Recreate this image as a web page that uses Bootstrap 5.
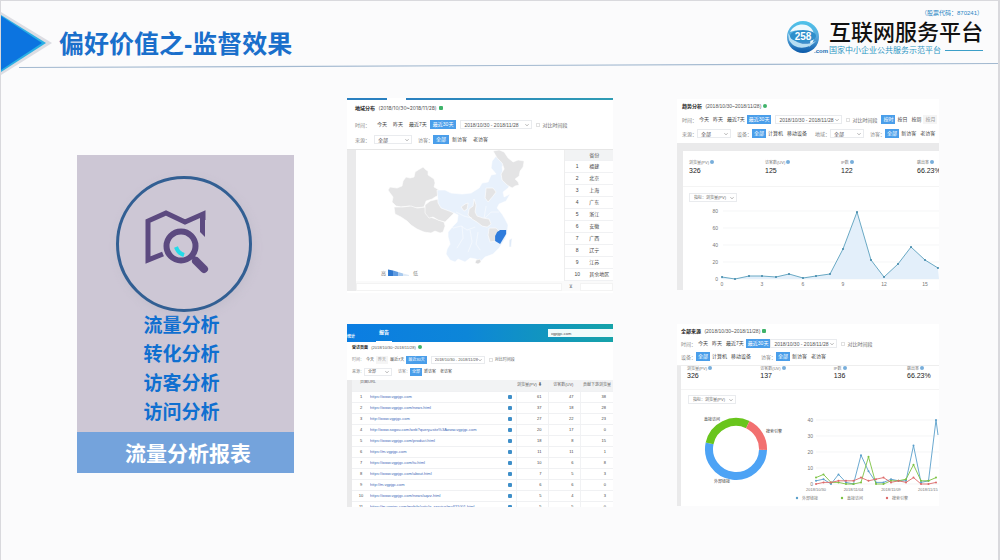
<!DOCTYPE html>
<html lang="zh-CN">
<head>
<meta charset="utf-8">
<meta name="viewport" content="width=device-width, initial-scale=1">
<title>偏好价值之-监督效果</title>
<link rel="stylesheet" href="https://cdn.jsdelivr.net/npm/bootstrap@5.3.0/dist/css/bootstrap.min.css">
<style>
:root{--act:#4a9eea;--line:#e9ebee;--strip:#eaeaeb}
body{background:#fbfbfc;font-family:"Liberation Sans","Noto Sans CJK SC",sans-serif;min-height:100vh;border:1px solid #d9d9dd;border-width:1px 2px 0 1px;color:#444;overflow-x:hidden}
.top-band{height:75px}
.top-band .rule{left:0;top:0;width:100%;height:75px;pointer-events:none}
.arrow{width:51px;height:63px;margin-top:11px}
h1{font:700 25px/34px "Liberation Sans","Noto Sans CJK SC",sans-serif;color:#1a6fcb;margin:26px 0 0 7px}
.brand{margin:6px 15px 0 0}
.brand-stock{font-size:6px;line-height:12px;color:#2a86c4}
.brand-name{font:500 22px/22px "Noto Sans CJK SC",sans-serif;color:#111;white-space:nowrap}
.brand-sub{font:400 8px/10px "Noto Sans CJK SC",sans-serif;color:#2f97c4;white-space:nowrap;margin-top:4px}
.brand-sub i{height:1px;background:#3c9fc8}
.logo{width:44px;height:36px}
main{display:grid;grid-template-columns:217fr 592fr;column-gap:53px;padding:22px 59px 0 76px;align-items:start}
.report{background:#cdc7d5;margin-top:57px}
.report .ring{width:136px;height:136px;margin:21px auto 0;border:3px solid #325f93;border-radius:50%;box-shadow:2px 3px 8px #b9b4c477;position:relative;left:-2px}
.report li{font:700 19px/29px "Noto Sans CJK SC",sans-serif;color:#0f6fd0}
.report ul{margin:-3px 8px 7px 0}
.report h2{background:#74a3dc;color:#fff;font:700 21px/41px "Noto Sans CJK SC",sans-serif;margin:0;padding-left:5px}
.shots{display:grid;grid-template-columns:266fr 262fr;column-gap:64px;row-gap:31px;align-items:start}
.shot{background:#fff;font-size:5px;line-height:6px;overflow:hidden;min-width:0;white-space:nowrap}
.shot svg{display:block}
.shot h3{font-size:5px;line-height:8px;margin:0;font-weight:700;color:#222}
.shot h3 span{font-weight:400;color:#555;margin:0 2px}
.tip{display:inline-block;width:4px;height:4px;border-radius:1px;background:#3fb36a}
.tip.round{border-radius:50%}
.flt{display:flex;align-items:center;height:9px}
.flt label,.flt .cap{color:#888}
.flt label[for^="c"]{color:#666}
.seg{border:0;background:#fff;color:#444;font:inherit;line-height:9px;height:9px;padding:0 2px;border-radius:0}
.seg.on{background:var(--act);color:#fff}
.seg.dim{background:#f5f5f5;color:#999}
.roomy .seg{padding:0 3px}
.mini.form-select{font:inherit;line-height:8px;height:9px;min-height:0;width:34px;padding:0 6px 0 3px;border:1px solid var(--line);border-radius:0;color:#555;background-color:#fff;background-size:4px 4px;background-position:right 2px center;background-image:url("data:image/svg+xml,%3Csvg xmlns='http://www.w3.org/2000/svg' viewBox='0 0 10 10'%3E%3Cpath d='M1 3l4 4 4-4' fill='none' stroke='%23777' stroke-width='1.4'/%3E%3C/svg%3E")}
.mini.form-select.date{width:67px}
.roomy .mini.form-select{width:38px}
.roomy .mini.form-select.date{width:72px}
.mini.form-select.metric{width:48px;color:#666;font-size:4px;padding-left:4px}
.tick.form-check-input{width:4px;height:4px;margin:0 2px 0 4px;border:1px solid #e1e1e1;border-radius:0;float:none;min-height:0}
.g6{margin-left:6px}
.shot.a{height:195px}
.tabbar{height:2px;background:linear-gradient(90deg,#2a80c0 0 15%,#fff 15% 22%,#2a80c0 22%,#2f9cb4)}
.side{background:var(--strip);flex:none}
table.plain{border-collapse:collapse;width:100%;table-layout:fixed;font-size:5px;line-height:6px;color:#444}
table.plain th{background:#f2f3f4;font-weight:400;color:#666}
table.plain td,table.plain th{padding:0;border-bottom:1px solid #f0f1f3;overflow:hidden}
.prov{border-left:1px solid #eee}
.prov tr{height:12px}
.prov tr:first-child{height:10px}
.prov td:first-child{text-align:center}
.map{width:81%;flex:none}
.foot{background:#fafafa;padding-top:2px}
.foot div{background:#fff;height:8px;border:1px solid #f3f3f3}
.kpi{display:grid;grid-template-columns:76fr 76fr 76fr 22px}
.kpi dt{font-weight:400;font-size:4px;line-height:6px;color:#777}
.kpi dd{font-size:7px;line-height:10px;margin:0;color:#222}
.info{display:inline-block;width:4px;height:4px;border-radius:50%;background:#78aedb}
.small4,.small4 h3,.small4 table.plain{font-size:4px}
.small4 .seg,.small4 .flt{height:8px;line-height:8px}
.small4 .mini.form-select{width:28px;height:8px;line-height:6px}
.small4 .mini.form-select.date{width:54px}
.navi{height:18px;background:linear-gradient(90deg,#0b7de2,#0d86d8 45%,#16a3a9)}
.navi a{color:#fff;text-decoration:none;font-weight:700;font-size:4px}
.navi a.cur{border-bottom:1px solid #fff;line-height:17px;padding:0 3px;height:18px;font-size:5px}
.navi input{width:65px;height:8px;font-size:4px;line-height:6px;padding:0 3px;border:0;border-radius:0;background:#f1fbfb;color:#444;min-height:0}
.urls tr{height:11px}
.urls td:nth-child(n+4),.urls th:nth-child(n+4){text-align:right;padding-right:7px;border-left:1px solid #f1f2f4}
.urls td:first-child{text-align:center}
.urls a{color:#4169b8;text-decoration:none}
.go{display:block;width:4px;height:4px;border-radius:1px;background:#3f8fc9}
</style>
</head>
<body>
<header class="top-band d-flex position-relative">
<svg class="arrow flex-shrink-0" viewBox="0 0 51 63"><path d="M0 0L51 31 0 63z" fill="#dcdde3"/><path d="M0 3L45 31 0 60z" fill="#2bb0e4"/><path d="M0 4L41 31 0 58z" fill="#0c74e0"/></svg>
<h1>偏好价值之-监督效果</h1>
<div class="brand ms-auto text-end">
<div class="brand-stock">（股票代码：870241）</div>
<div class="d-flex align-items-start">
<svg class="logo" viewBox="0 0 44 36"><defs><linearGradient id="lg" x2="0" y2="1"><stop stop-color="#4cc3ea"/><stop offset=".5" stop-color="#58a8dc"/><stop offset="1" stop-color="#0a58a8"/></linearGradient></defs><circle cx="18" cy="18" r="16" fill="url(#lg)"/><path d="M5 13C9 5 20 3 26 9c5 6 4 14-2 19 2-5 2-9-1-12C18 10 10 11 5 13z" fill="#eef9fd"/><path d="M3 14c6 10 16 14 28 8-8 9-22 9-27-1z" fill="#b8def2"/><ellipse cx="18" cy="17" rx="13" ry="6" fill="#2e8fcb"/><text x="18" y="21" font-size="10" font-weight="700" text-anchor="middle" fill="#fff" font-family="Liberation Sans">258</text><text x="29" y="34" font-size="6" font-weight="700" fill="#1a70b4" font-family="Liberation Sans">.com</text></svg>
<div><div class="brand-name">互联网服务平台</div><div class="brand-sub d-flex align-items-center gap-1">国家中小企业公共服务示范平台<i class="flex-fill"></i></div></div>
</div></div>
<svg class="rule position-absolute" viewBox="0 0 997 75" preserveAspectRatio="none"><path d="M18 66.500L997 62.500" stroke="#a3b9d0" stroke-width="1.200"/></svg>
</header>
<main>
<section class="report text-center">
<div class="overflow-hidden">
<div class="ring"><svg viewBox="0 0 130 130" width="130" height="130"><path d="M44 76L29 82V43L47 35 66 44 84 36V42" transform="translate(0 -1)" fill="none" stroke="#5c4a80" stroke-width="5"/><path d="M86 58l-5-5V36h5z" fill="#5c4a80"/><circle cx="62" cy="67" r="14.500" fill="#cdc7d5" stroke="#5c4a80" stroke-width="6"/><path d="M57 68q2 6 8 8" fill="none" stroke="#22dbe8" stroke-width="4"/><path d="M73 77l4 4" stroke="#5c4a80" stroke-width="4"/><path d="M77 82l8 8" stroke="#5c4a80" stroke-width="8" stroke-linecap="round"/></svg></div>
<ul class="list-unstyled"><li>流量分析</li><li>转化分析</li><li>访客分析</li><li>访问分析</li></ul></div>
<h2>流量分析报表</h2>
</section>
<div class="shots">

<section class="shot a roomy">
<div class="tabbar"></div>
<div class="ps-2">
<h3 class="pt-1">地域分布 <span style="font-family:Inter,sans-serif">(2018/10/30~2018/11/28)</span><i class="tip"></i></h3>
<div class="flt mt-2"><span class="cap">时间：</span><button class="seg ms-1">今天</button><button class="seg">昨天</button><button class="seg">最近7天</button><button class="seg on">最近30天</button><select class="form-select mini date ms-1" aria-label="日期"><option>2018/10/30 - 2018/11/28</option></select><input class="form-check-input tick" type="checkbox" id="c1"><label for="c1">对比时间段</label></div>
<div class="flt" style="margin-top:6px"><label class="me-1" for="s1">来源：</label><select id="s1" class="form-select mini"><option>全部</option></select><span class="cap g6">访客：</span><button class="seg on">全部</button><button class="seg">新访客</button><button class="seg">老访客</button></div>
</div>
<div class="d-flex border-top" style="margin-top:5px;--bs-border-color:#e6e6e6">
<div class="side" style="width:9px"></div>
<div class="flex-fill">
<div class="d-flex align-items-start">
<svg class="map" viewBox="356 150 208 126">
<g stroke="#fff" stroke-width=".6" stroke-linejoin="round">
<path fill="#e4e4e5" d="M388 190l2-3 7 1 5-2 1-5 3-4 4 1 4-1 1-5 3-2 5-3 3 3 2 1 0 4 6 4 1 4-1 4 5 3 2 4-6 3-3 2-6 2-2 6-9 1-6-2-8 1-5-1-4-4 1-5-3-4z"/>
<path fill="#e4e4e5" d="M394 207l8 0 9-1 6 2 8-1 1 4 4 6 6 2 8 3 1 4-2 6-3 1-5-2-4 2-7-1-7-3-6-4-4-4-6-4-6-3z"/>
<path fill="#e4e4e5" d="M425 205l5-4 8-2 8 1 5 4 4 2 1 4-3 4-4 4-4 4-7-2-5-3-4 1-4-5z"/>
<path fill="#e8f1fc" d="M437 190l8 0 6 3 11 1 9-1 8-5 3-5 6-1 3-7 5-1-5-6 1-7 4-5 1-4 3-1 5 3 1 7-4 6 1 6 5 4 3 6-3 5-5 4 1 5 6-3-4 7-7 3-2 4 5 6 3 5 3 6-1 8-2 6-6 9-6 6-8 3-5 5-4-3-6-1-5 4-7-3-3 3-5-2-4-6 1-5 3-5-2-7 0-5 5-6 4-4 1-7-4-2-5-2-8-3-3-5z"/>
<path fill="#e4e4e5" d="M493 151l6-1 5 2 4 6 5 4 5-2 6 1-1 6-3 4-1 5-4 3 3 3 1 3-4 1-3 2-5-3-5-5-1-6 3-5-2-6-5-5z"/>
<path fill="#e4e4e5" d="M474 199l2 6-1 7 2 4 6 2 6 1 2 5-4 3-5-1-5-4-5-3-4-4 1-6 4-3zM461 207l4-3 3-1-1 6-3 2zM486 188l7 0 3 4-3 4-5 6-3-4zM489 228l7 0 3 3-3 10-6 1-2-7z"/>
<path fill="#2f7cdc" stroke="none" d="M497 232l3-2 6 0 0 4-3 5-3 5-5-3 0-5z"/>
<path fill="#dfeaf8" d="M509 240l3-2-1 9-2 0z"/><path fill="#dcdcdd" d="M476 260l4-1 1 3-3 2-3-1z"/>
</g>
<path d="M447 222l6 6 8-2 6 4 8-3M462 226l1 12-6 10M470 230l2 12-4 10M478 232l-2 12 4 6M456 212l8 4 8 2M485 218l6-6 8 0M486 206l-2 12" fill="none" stroke="#fff" stroke-width=".5"/>
<path d="M388 269.500l5 1V276h-5z" fill="#2f78cf"/><path d="M393 270.500l5 1.500v4h-5z" fill="#5f9be0"/><path d="M398 272l5 1.500v2.500h-5z" fill="#a9caee"/><path d="M403 273.500l6 1.500v1h-6z" fill="#dfeaf6"/>
<text x="381" y="275" font-size="5" fill="#777">高</text><text x="413" y="275" font-size="5" fill="#888">低</text>
</svg>
<div class="flex-fill prov"><table class="plain"><colgroup><col style="width:24px"><col></colgroup><tr><th></th><th>省份</th></tr><tr><td>1</td><td>福建</td></tr><tr><td>2</td><td>北京</td></tr><tr><td>3</td><td>上海</td></tr><tr><td>4</td><td>广东</td></tr><tr><td>5</td><td>浙江</td></tr><tr><td>6</td><td>安徽</td></tr><tr><td>7</td><td>广西</td></tr><tr><td>8</td><td>辽宁</td></tr><tr><td>9</td><td>江苏</td></tr><tr><td>10</td><td>其余地区</td></tr></table></div>
</div>
<div class="foot d-flex justify-content-between"><div style="width:80%"></div><span class="text-secondary">⊻</span><div style="width:13%"></div></div>
</div></div>
</section>

<section class="shot" style="margin-top:1px">
<div style="padding-left:5px">
<h3 style="padding-top:3px">趋势分析 <span>(2018/10/30~2018/11/28)</span><i class="tip round"></i></h3>
<div class="flt" style="margin-top:5px"><span class="cap">时间：</span><button class="seg">今天</button><button class="seg">昨天</button><button class="seg">最近7天</button><button class="seg on">最近30天</button><select class="form-select mini date ms-1" aria-label="日期"><option>2018/10/30 - 2018/11/28</option></select><input class="form-check-input tick" type="checkbox" id="c2"><label for="c2">对比时间段</label><button class="seg on ms-1">按时</button><button class="seg">按日</button><button class="seg">按周</button><button class="seg dim">按月</button></div>
<div class="flt" style="margin-top:5px"><label for="s2">来源：</label><select id="s2" class="form-select mini"><option>全部</option></select><span class="cap g6">设备：</span><button class="seg on">全部</button><button class="seg">计算机</button><button class="seg">移动设备</button><label for="s3" class="g6">地域：</label><select id="s3" class="form-select mini"><option>全部</option></select><span class="cap g6">访客：</span><button class="seg on">全部</button><button class="seg">新访客</button><button class="seg">老访客</button></div>
</div>
<div class="side" style="margin-top:5px;padding:8px 0 0 6px"><div class="bg-white">
<dl class="kpi m-0 border-bottom" style="padding:9px 0 10px 6px;--bs-border-color:#f4f4f4"><div><dt>浏览量(PV) <i class="info"></i></dt><dd>326</dd></div><div><dt>访客数(UV) <i class="info"></i></dt><dd>125</dd></div><div><dt>IP数 <i class="info"></i></dt><dd>122</dd></div><div><dt>跳出率 <i class="info"></i></dt><dd>66.23%</dd></div></dl>
<div style="padding:6px 0 0 6px"><select class="form-select mini metric" aria-label="指标"><option>指标：浏览量(PV)</option></select></div>
<svg id="trend" width="100%" viewBox="683 202 256 88" font-size="5" fill="#777"></svg>
</div></div>
</section>

<section class="shot small4">
<nav class="navi d-flex align-items-center"><a href="#" class="mt-2">统计</a><a href="#" class="cur" style="margin-left:21px">报告</a><input class="form-control ms-auto" aria-label="网站" value="vgpjgc.com"></nav>
<div style="padding-left:5px">
<h3 style="padding-top:2px">受访页面 <span>(2018/10/30~2018/11/28)</span><i class="tip round"></i></h3>
<div class="flt" style="margin-top:4px"><span class="cap">时间：</span><button class="seg">今天</button><button class="seg dim">昨天</button><button class="seg">最近7天</button><button class="seg on">最近30天</button><select class="form-select mini date ms-1" aria-label="日期"><option>2018/10/30 - 2018/11/28</option></select><input class="form-check-input tick" type="checkbox" id="c3"><label for="c3">对比时间段</label></div>
<div class="flt" style="margin-top:4px"><label for="s4">来源：</label><select id="s4" class="form-select mini"><option>全部</option></select><span class="cap g6">访客：</span><button class="seg on">全部</button><button class="seg">新访客</button><button class="seg">老访客</button></div>
</div>
<div class="d-flex overflow-hidden" style="margin-top:4px;height:127px"><div class="side" style="width:5px"></div>
<div class="flex-fill"><table class="plain urls"><colgroup><col style="width:18px"><col><col style="width:9px"><col style="width:32px"><col style="width:32px"><col style="width:32px"></colgroup>
<thead><tr><th colspan="2" class="ps-2 align-top" style="line-height:3px">页面URL</th><th></th><th>浏览量(PV) ⬇</th><th>访客数(UV)</th><th style="padding-right:2px">贡献下游浏览量</th></tr></thead><tbody id="urls"></tbody></table></div></div>
</section>

<section class="shot">
<div style="padding-left:4px">
<h3 style="padding-top:3px">全部来源 <span>(2018/10/30~2018/11/28)</span><i class="tip"></i></h3>
<div class="flt" style="margin-top:4px"><span class="cap">时间：</span><button class="seg">今天</button><button class="seg">昨天</button><button class="seg">最近7天</button><button class="seg on">最近30天</button><select class="form-select mini date" aria-label="日期"><option>2018/10/30 - 2018/11/28</option></select><input class="form-check-input tick" type="checkbox" id="c4"><label for="c4">对比时间段</label></div>
<div class="flt" style="margin-top:4px"><span class="cap">设备：</span><button class="seg on">全部</button><button class="seg">计算机</button><button class="seg">移动设备</button><span class="cap ms-2">访客：</span><button class="seg on">全部</button><button class="seg">新访客</button><button class="seg">老访客</button></div>
</div>
<div class="border-top d-flex" style="margin-top:4px;--bs-border-color:#eee"><div class="side" style="width:4px"></div><div class="flex-fill">
<dl class="kpi m-0 border-bottom overflow-hidden" style="padding:0 10px 8px 6px;--bs-border-color:#f4f4f4"><div><dt class="lh-1">浏览量(PV) <i class="info"></i></dt><dd>326</dd></div><div><dt class="lh-1">访客数(UV) <i class="info"></i></dt><dd>137</dd></div><div><dt class="lh-1">IP数 <i class="info"></i></dt><dd>136</dd></div><div><dt class="lh-1">跳出率 <i class="info"></i></dt><dd>66.23%</dd></div></dl>
<div style="padding:5px 0 0 7px"><select class="form-select mini metric" aria-label="指标"><option>指标：浏览量(PV)</option></select></div>
<svg id="mix" width="100%" viewBox="681 404 258 102" font-size="5" fill="#777"></svg>
</div></div>
</section>
</div>
</main>
<script>
const trend=[2,0,3,4,2,6,1,3,6,35,79,22,2,18,38,22,13];
const tp=trend.map((v,i)=>[Math.round(721.5+i*13.55),Math.round(279-v*.85)]);
let s='';
[0,20,40,60,80].forEach(v=>{const y=Math.round(279-v*.845);s+=`<path d="M723 ${y}H939" stroke="#eef0f2" stroke-width=".6"/><text x="718" y="${y+2}" text-anchor="end">${v}</text>`});
s+=`<polygon points="721,279 ${tp.join(' ')} 939,279" fill="#e3effa"/><polyline points="${tp.join(' ')}" fill="none" stroke="#6aa9c4" stroke-width="1"/>`;
tp.forEach(p=>s+=`<circle cx="${p[0]}" cy="${p[1]}" r="1" fill="#3f87a8"/>`);
[0,3,6,9,12,15].forEach(v=>s+=`<text x="${Math.round(721.5+v*13.55)}" y="286" text-anchor="middle">${v}</text>`);
document.getElementById('trend').innerHTML=s;

const series=[['#5a9fcb',[2,3,0,6,1,0,18,8,1,1,3,2,2,24,1,2,40]],['#7cc242',[4,6,1,1,0,0,1,17,0,0,2,2,3,12,2,2,4]],['#dd6a6a',[0,1,1,2,2,2,4,2,3,4,1,2,1,4,0,0,1]]];
s='';
const pt=(a,r)=>{const t=(a-90)*Math.PI/180;return (736+r*Math.cos(t)).toFixed(1)+' '+(449+r*Math.sin(t)).toFixed(1)};
[[92,282,'#4da3f5'],[282,386,'#69c51d'],[26,92,'#f27070']].forEach(([a,b,c])=>s+=`<path d="M${pt(a,27)}A27 27 0 ${b-a>180?1:0} 1 ${pt(b,27)}" fill="none" stroke="${c}" stroke-width="8"/>`);
s+='<g fill="#444" font-size="4"><text x="704" y="421">直接访问</text><text x="766" y="433">搜索引擎</text><text x="714" y="483">外部链接</text></g>';
[0,10,20,30,40].forEach(v=>{const y=484-v*1.6;s+=`<path d="M816 ${y}H939" stroke="#eceef0" stroke-width=".6"/><text x="813" y="${y+2}" text-anchor="end">${v}</text>`});
series.forEach(([c,d])=>{const p=d.map((v,i)=>[816+i*7.5,484-v*1.6]);s+=`<polyline points="${p.join(' ')}" fill="none" stroke="${c}" stroke-width=".9"/>`;p.forEach(q=>s+=`<circle cx="${q[0]}" cy="${q[1]}" r="1" fill="${c}"/>`)});
s+='<path d="M936 420l2 15" stroke="#5a9fcb" stroke-width=".9"/>';
['2018/10/30','2018/11/04','2018/11/09','2018/11/15'].forEach((t,i)=>s+=`<text x="${i==3?918:816+i*37.5}" y="491" font-size="4" text-anchor="${i==3?'start':'middle'}">${t}</text>`);
['外部链接','直接访问','搜索引擎'].forEach((t,i)=>s+=`<circle cx="${797+i*45}" cy="498" r="1.2" fill="${series[i][0]}"/><text x="${802+i*45}" y="500" font-size="4">${t}</text>`);
document.getElementById('mix').innerHTML=s;

const rows=[['https://www.vgpjgc.com',61,47,38],['https://www.vgpjgc.com/news.html',37,18,28],['http://www.vgpjgc.com',27,22,23],['http://www.sogou.com/web?query=site%3Awww.vgpjgc.com',20,17,0],['https://www.vgpjgc.com/product.html',18,8,15],['https://m.vgpjgc.com',11,11,1],['https://www.vgpjgc.com/tu.html',10,6,8],['https://www.vgpjgc.com/about.html',7,5,3],['http://m.vgpjgc.com',6,6,0],['https://www.vgpjgc.com/news/aqzz.html',5,4,3],['https://m.vgpjgc.com/mobile/article_service/mall?1001.html',5,5,0]];
document.getElementById('urls').innerHTML=rows.map((r,i)=>`<tr><td>${i+1}</td><td><a href="#">${r[0]}</a></td><td><i class="go"></i></td><td>${r[1]}</td><td>${r[2]}</td><td>${r[3]}</td></tr>`).join('');
</script>
<script src="https://cdn.jsdelivr.net/npm/bootstrap@5.3.0/dist/js/bootstrap.bundle.min.js"></script>
</body>
</html>
